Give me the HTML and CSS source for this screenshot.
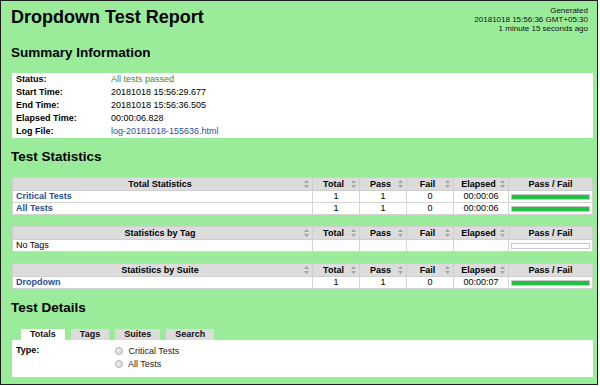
FILE: index.html
```html
<!DOCTYPE html>
<html lang="en">
<head>
  <meta charset="UTF-8" />
  <title>Dropdown Test Report</title>
  <link rel="stylesheet" href="styles.css">
</head>
<body>
  <div class="page">

    <!-- title + generated time -->
    <div class="header">
      <h1>Dropdown Test Report</h1>
      <div class="generated">
        Generated<br>
        20181018 15:56:36 GMT+05:30<br>
        1 minute 15 seconds ago
      </div>
    </div>

    <h2 class="summary-title">Summary Information</h2>
    <table class="details">
      <tr><th>Status:</th><td class="pass">All tests passed</td></tr>
      <tr><th>Start Time:</th><td>20181018 15:56:29.677</td></tr>
      <tr><th>End Time:</th><td>20181018 15:56:36.505</td></tr>
      <tr><th>Elapsed Time:</th><td>00:00:06.828</td></tr>
      <tr><th>Log File:</th><td><a href="#">log-20181018-155636.html</a></td></tr>
    </table>

    <h2 class="stats-title">Test Statistics</h2>

    <table class="statistics">
      <tr>
        <th class="col-name">Total Statistics<span class="sort"><svg width="5" height="8" viewBox="0 0 5 8"><polygon points="2.5,0 5,3 0,3"/><polygon points="0,5 5,5 2.5,8"/></svg></span></th>
        <th class="col-stat">Total<span class="sort"><svg width="5" height="8" viewBox="0 0 5 8"><polygon points="2.5,0 5,3 0,3"/><polygon points="0,5 5,5 2.5,8"/></svg></span></th>
        <th class="col-stat">Pass<span class="sort"><svg width="5" height="8" viewBox="0 0 5 8"><polygon points="2.5,0 5,3 0,3"/><polygon points="0,5 5,5 2.5,8"/></svg></span></th>
        <th class="col-stat">Fail<span class="sort"><svg width="5" height="8" viewBox="0 0 5 8"><polygon points="2.5,0 5,3 0,3"/><polygon points="0,5 5,5 2.5,8"/></svg></span></th>
        <th class="col-elapsed">Elapsed<span class="sort"><svg width="5" height="8" viewBox="0 0 5 8"><polygon points="2.5,0 5,3 0,3"/><polygon points="0,5 5,5 2.5,8"/></svg></span></th>
        <th class="col-graph">Pass / Fail</th>
      </tr>
      <tr>
        <td class="name"><a href="#">Critical Tests</a></td>
        <td>1</td><td>1</td><td>0</td><td>00:00:06</td>
        <td class="graph-cell"><div class="graph"></div></td>
      </tr>
      <tr>
        <td class="name"><a href="#">All Tests</a></td>
        <td>1</td><td>1</td><td>0</td><td>00:00:06</td>
        <td class="graph-cell"><div class="graph"></div></td>
      </tr>
    </table>

    <table class="statistics">
      <tr>
        <th class="col-name">Statistics by Tag<span class="sort"><svg width="5" height="8" viewBox="0 0 5 8"><polygon points="2.5,0 5,3 0,3"/><polygon points="0,5 5,5 2.5,8"/></svg></span></th>
        <th class="col-stat">Total<span class="sort"><svg width="5" height="8" viewBox="0 0 5 8"><polygon points="2.5,0 5,3 0,3"/><polygon points="0,5 5,5 2.5,8"/></svg></span></th>
        <th class="col-stat">Pass<span class="sort"><svg width="5" height="8" viewBox="0 0 5 8"><polygon points="2.5,0 5,3 0,3"/><polygon points="0,5 5,5 2.5,8"/></svg></span></th>
        <th class="col-stat">Fail<span class="sort"><svg width="5" height="8" viewBox="0 0 5 8"><polygon points="2.5,0 5,3 0,3"/><polygon points="0,5 5,5 2.5,8"/></svg></span></th>
        <th class="col-elapsed">Elapsed<span class="sort"><svg width="5" height="8" viewBox="0 0 5 8"><polygon points="2.5,0 5,3 0,3"/><polygon points="0,5 5,5 2.5,8"/></svg></span></th>
        <th class="col-graph">Pass / Fail</th>
      </tr>
      <tr>
        <td class="name plain">No Tags</td>
        <td></td><td></td><td></td><td></td>
        <td class="graph-cell"><div class="graph empty"></div></td>
      </tr>
    </table>

    <table class="statistics">
      <tr>
        <th class="col-name">Statistics by Suite<span class="sort"><svg width="5" height="8" viewBox="0 0 5 8"><polygon points="2.5,0 5,3 0,3"/><polygon points="0,5 5,5 2.5,8"/></svg></span></th>
        <th class="col-stat">Total<span class="sort"><svg width="5" height="8" viewBox="0 0 5 8"><polygon points="2.5,0 5,3 0,3"/><polygon points="0,5 5,5 2.5,8"/></svg></span></th>
        <th class="col-stat">Pass<span class="sort"><svg width="5" height="8" viewBox="0 0 5 8"><polygon points="2.5,0 5,3 0,3"/><polygon points="0,5 5,5 2.5,8"/></svg></span></th>
        <th class="col-stat">Fail<span class="sort"><svg width="5" height="8" viewBox="0 0 5 8"><polygon points="2.5,0 5,3 0,3"/><polygon points="0,5 5,5 2.5,8"/></svg></span></th>
        <th class="col-elapsed">Elapsed<span class="sort"><svg width="5" height="8" viewBox="0 0 5 8"><polygon points="2.5,0 5,3 0,3"/><polygon points="0,5 5,5 2.5,8"/></svg></span></th>
        <th class="col-graph">Pass / Fail</th>
      </tr>
      <tr>
        <td class="name"><a href="#">Dropdown</a></td>
        <td>1</td><td>1</td><td>0</td><td>00:00:07</td>
        <td class="graph-cell"><div class="graph"></div></td>
      </tr>
    </table>

    <h2 class="details-title">Test Details</h2>
    <div class="tabs">
      <span class="tab active">Totals</span>
      <span class="tab">Tags</span>
      <span class="tab">Suites</span>
      <span class="tab">Search</span>
    </div>
    <div class="panel">
      <table class="type-table">
        <tr>
          <th>Type:</th>
          <td>
            <label><input type="radio" name="type"> Critical Tests</label><br>
            <label><input type="radio" name="type"> All Tests</label>
          </td>
        </tr>
      </table>
    </div>

  </div>
</body>
</html>
```

FILE: styles.css
```css
body {
  margin: 0;
  background: #fff;
  font-family: "Liberation Sans", Arial, sans-serif;
  color: #000;
}

.page {
  width: 598px;
  height: 385px;
  box-sizing: border-box;
  border: 1px solid #1c1c1c;
  background: #9aec9a;
  padding: 4px 6px 0 10px;
  overflow: hidden;
}

.header {
  display: flex;
  justify-content: space-between;
  align-items: flex-start;
}

h1 {
  margin: 0;
  font-size: 18px;
  line-height: 24px;
}

.generated {
  font-size: 8px;
  line-height: 9px;
  text-align: right;
  padding-top: 1px;
  margin-right: 3px;
  color: #111;
}

h2 {
  margin: 0;
  font-size: 13.5px;
  line-height: 16px;
}

.summary-title { margin-top: 12px; margin-bottom: 12px; }
.stats-title { margin-top: 11px; margin-bottom: 12px; }
.details-title { margin-top: 0; margin-bottom: 13px; }

a {
  color: #28509a;
  text-decoration: none;
}

/* summary */
.details {
  width: 581px;
  border-collapse: collapse;
  background: #fff;
  font-size: 9px;
  margin-left: 1px;
}

.details th,
.details td {
  padding: 0 4px;
  height: 13px;
  line-height: 13px;
  text-align: left;
}

.details th {
  width: 87px;
  font-weight: bold;
}

.details .pass {
  color: #3f883f;
}

/* statistics tables */
.statistics {
  width: 581px;
  margin-left: 1px;
  border-collapse: collapse;
  table-layout: fixed;
  font-size: 9px;
  margin-bottom: 11px;
}

.statistics th {
  background: #dcdcdc;
  font-weight: bold;
  height: 12px;
  line-height: 12px;
  padding: 0 3px;
  border: 1px solid #cfcfcf;
  text-align: center;
}

.statistics td {
  background: #fff;
  height: 11px;
  line-height: 11px;
  padding: 0 2px;
  border: 1px solid #d4d4d4;
  text-align: center;
}

.statistics td.name {
  text-align: left;
  padding-left: 3px;
}

.statistics td.name a {
  font-weight: bold;
}

.col-name { width: auto; }
.col-stat { width: 40px; }
.col-elapsed { width: 48px; }
.col-graph { width: 77px; }

.sort {
  float: right;
  height: 12px;
  display: flex;
  align-items: center;
}

.sort svg {
  fill: #a4a4a4;
}

.graph-cell {
  padding: 0 2px;
}

.graph {
  height: 4px;
  border: 1px solid #c8c8c8;
  background: #22c045;
}

.graph.empty {
  background: #fff;
}

/* test details */
.tabs {
  display: flex;
  gap: 6px;
  padding-left: 10px;
}

.tab {
  background: #dcdcdc;
  padding: 0 9px;
  font-size: 9px;
  line-height: 11px;
  font-weight: bold;
  color: #111;
}

.tab.active {
  background: #fff;
}

.panel {
  background: #fff;
  margin-left: 1px;
  width: 581px;
  padding: 4px 0 6px;
}

.type-table {
  border-collapse: collapse;
  font-size: 9px;
}

.type-table th {
  text-align: left;
  vertical-align: top;
  width: 95px;
  padding: 0 4px;
  line-height: 12px;
}

.type-table td {
  line-height: 13px;
  padding: 1px 0 0;
}

.type-table input {
  appearance: none;
  width: 8px;
  height: 8px;
  margin: 0 3px 0 0;
  border: 1px solid #b4b4b4;
  border-radius: 50%;
  background: radial-gradient(circle at 40% 40%, #f2f2f2, #d0d0d0);
  vertical-align: -1px;
}

.type-table label {
  color: #222;
}
```
